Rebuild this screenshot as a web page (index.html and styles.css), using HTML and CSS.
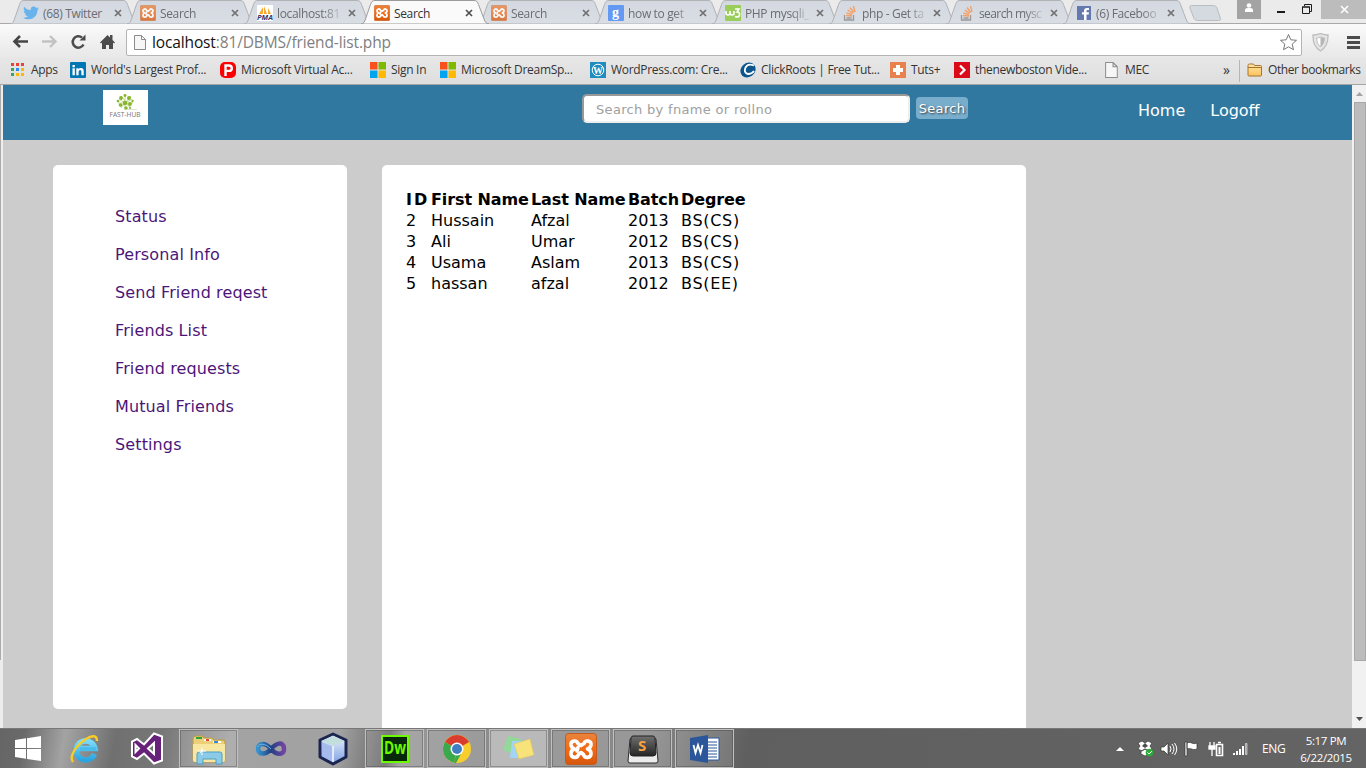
FILE: index.html
```html
<!DOCTYPE html>
<html lang="en">
<head>
<meta charset="utf-8">
<title>Search</title>
<link rel="stylesheet" href="styles.css">
</head>
<body>
<svg class="defs" width="0" height="0">
  <defs>
    <linearGradient id="tabfill" x1="0" y1="0" x2="0" y2="1"><stop offset="0" stop-color="#d4d9e1"/><stop offset="1" stop-color="#d9dde4"/></linearGradient>
    <linearGradient id="folder" x1="0" y1="0" x2="0" y2="1"><stop offset="0" stop-color="#ffe5a8"/><stop offset="1" stop-color="#fbc35c"/></linearGradient>
    <linearGradient id="orange" x1="0" y1="0" x2="0" y2="1"><stop offset="0" stop-color="#e8843f"/><stop offset=".5" stop-color="#f36b14"/><stop offset="1" stop-color="#d5560c"/></linearGradient>
    <linearGradient id="inf" x1="0" y1="0" x2="1" y2="0"><stop offset="0" stop-color="#3794cf"/><stop offset=".5" stop-color="#223f83"/><stop offset="1" stop-color="#7245a4"/></linearGradient>
    <linearGradient id="key" x1="0" y1="0" x2="0" y2="1"><stop offset="0" stop-color="#707070"/><stop offset="1" stop-color="#252525"/></linearGradient>
    <linearGradient id="cube" x1="0" y1="0" x2="0" y2="1"><stop offset="0" stop-color="#f0f6ff"/><stop offset="1" stop-color="#7d9fe0"/></linearGradient>
    <linearGradient id="ie" x1="0" y1="0" x2="0" y2="1"><stop offset="0" stop-color="#7bdcfa"/><stop offset="1" stop-color="#2ba5e0"/></linearGradient>
  </defs>
  <symbol id="tab" viewBox="0 0 129 24"><path d="M0 24C3 23.500 3.500 22 4.500 19L9.500 4.500C10.500 2 11 .5 14 .5H113C116 .5 116.500 2 117.500 4.500L123 19C124 22 125 23.500 128 24Z"/></symbol>
  <symbol id="xampp" viewBox="0 0 32 32"><rect x=".5" y=".5" width="31" height="31" rx="3" fill="url(#orange)" stroke="#c65a1c"/><path d="M19 10.500C20.500 6.500 26.500 7.500 26 12Q25.500 15 22.500 16 26 17 26 20.500C26 25.500 19.500 25.500 18.500 21.500L16 19.500 13.500 21.500C12.500 25.500 6 25.500 6 20.500Q6 17 9.500 16 6.500 15 6 12C5.500 7.500 11.500 6.500 13 10.500L16 12.500ZM13 14.500L12 18" fill="none" stroke="#fff" stroke-width="3.600" stroke-linejoin="round" stroke-linecap="round"/></symbol>
  <symbol id="so" viewBox="0 0 16 16"><path d="M2.500 10v5h9v-5M4.500 13h5" fill="none" stroke="#999" stroke-width="1.300"/><path d="M4 10.500l6 .5M4.500 8l5.500 1.700M5.700 5l5 3.300M8 2.500l3.700 5M11.500 1l1.500 6" stroke="#f3a167" stroke-width="1.400"/></symbol>
  <symbol id="ms" viewBox="0 0 16 16"><path fill="#f8511d" d="M0 0h7.500v7.500H0z"/><path fill="#7fba00" d="M8.500 0H16v7.500H8.500z"/><path fill="#02a4ef" d="M0 8.500h7.500V16H0z"/><path fill="#ffb902" d="M8.500 8.500H16V16H8.500z"/></symbol>
  <symbol id="doc" viewBox="0 0 12 15"><path d="M.5.5h7l4 4v10H.5zM7.500.5v4h4" fill="#f6f6f6" stroke="#8b8b8b"/></symbol>
</svg>

<header class="tabs">
  <div class="tab"><svg class="shape"><use href="#tab"/></svg><svg class="fav" viewBox="0 0 16 16"><path fill="#68b3ec" d="M16 3.500c-.6.300-1.200.4-1.800.5.600-.4 1-1 1.300-1.700-.7.300-1.400.5-2 .7C10.500 0 7 2 7.800 5.200 5 5 3 4 1.200 1.800.200 3.700.800 5.200 2.200 6.200c-.5 0-1-.2-1.400-.4 0 1.800 1 2.900 2.600 3.300H2c.5 1.300 1.500 2 3 2.200-1.500 1.100-3 1.500-5 1.400 7 4 14.500 0 14.400-7.600.6-.4 1.200-1 1.600-1.600z"/></svg><span class="label">(68) Twitter</span><svg class="close" viewBox="0 0 8 8"><path d="M1 1l6 6M7 1l-6 6"/></svg></div>
  <div class="tab"><svg class="shape"><use href="#tab"/></svg><svg class="fav dim"><use href="#xampp"/></svg><span class="label">Search</span><svg class="close" viewBox="0 0 8 8"><path d="M1 1l6 6M7 1l-6 6"/></svg></div>
  <div class="tab"><svg class="shape"><use href="#tab"/></svg><svg class="fav" viewBox="0 0 16 16"><path fill="#fff" d="M0 0h16v16H0z"/><path fill="#f7a72d" d="M2 9L6 2v7zM7 9V1l3 8zM11 9V3l3 6z"/><text x="0" y="15" textLength="16" lengthAdjust="spacingAndGlyphs" class="pma">PMA</text></svg><span class="label">localhost:81</span><svg class="close" viewBox="0 0 8 8"><path d="M1 1l6 6M7 1l-6 6"/></svg></div>
  <div class="tab active"><svg class="shape"><use href="#tab"/></svg><svg class="fav"><use href="#xampp"/></svg><span class="label">Search</span><svg class="close" viewBox="0 0 8 8"><path d="M1 1l6 6M7 1l-6 6"/></svg></div>
  <div class="tab"><svg class="shape"><use href="#tab"/></svg><svg class="fav dim"><use href="#xampp"/></svg><span class="label">Search</span><svg class="close" viewBox="0 0 8 8"><path d="M1 1l6 6M7 1l-6 6"/></svg></div>
  <div class="tab"><svg class="shape"><use href="#tab"/></svg><svg class="fav" viewBox="0 0 16 16"><rect width="16" height="16" rx="1" fill="#6499f3"/><text x="4" y="12" class="goog">g</text></svg><span class="label">how to get</span><svg class="close" viewBox="0 0 8 8"><path d="M1 1l6 6M7 1l-6 6"/></svg></div>
  <div class="tab"><svg class="shape"><use href="#tab"/></svg><svg class="fav" viewBox="0 0 16 16"><rect width="16" height="16" rx="1" fill="#9bcd5d"/><path d="M1 6v2q0 2 2 2t2-2V6v2q0 2 2 2t2-2V6M10 4h4l-2 3q3 0 2.500 3t-4.500 1.500" fill="none" stroke="#fff" stroke-width="1.600"/></svg><span class="label">PHP mysqli_</span><svg class="close" viewBox="0 0 8 8"><path d="M1 1l6 6M7 1l-6 6"/></svg></div>
  <div class="tab"><svg class="shape"><use href="#tab"/></svg><svg class="fav"><use href="#so"/></svg><span class="label">php - Get ta</span><svg class="close" viewBox="0 0 8 8"><path d="M1 1l6 6M7 1l-6 6"/></svg></div>
  <div class="tab"><svg class="shape"><use href="#tab"/></svg><svg class="fav"><use href="#so"/></svg><span class="label tight">search mysc</span><svg class="close" viewBox="0 0 8 8"><path d="M1 1l6 6M7 1l-6 6"/></svg></div>
  <div class="tab"><svg class="shape"><use href="#tab"/></svg><svg class="fav" viewBox="0 0 16 16"><path fill="#6479b0" d="M1 1h14v14H1z"/><path fill="#fff" d="M8 15V9.500H6V7.300h2V6q0-3 3-3h2v2h-1.500q-1 0-1 1v1.300H13l-.3 2.200h-2.200V15z"/></svg><span class="label">(6) Faceboo</span><svg class="close" viewBox="0 0 8 8"><path d="M1 1l6 6M7 1l-6 6"/></svg></div>
  <svg class="newtab" width="34" height="17"><path d="M3.500.5h22q2.500 0 3.300 2l3.700 11q.5 2-2 2H9.500q-2.500 0-3.500-2L2 3q-.8-2.500 1.500-2.500z" fill="#d5dae1" stroke="#b9bcc1"/></svg>
  <div class="window">
    <div class="user"><svg width="10" height="10"><path fill="#fff" d="M1 9V7q0-2 3-2h2q3 0 3 2v2z"/><circle cx="5" cy="2.500" r="2.300" fill="#fff"/></svg></div>
    <svg class="mini" width="9" height="3"><path fill="#1b1b1b" d="M0 0h8v2H0z"/></svg>
    <svg class="maxi" width="11" height="11"><path d="M2.500 2V.5h7v7H8M.5 3h7v6.500h-7zM0 3h8" fill="none" stroke="#1b1b1b"/></svg>
    <div class="x"><svg width="9" height="9"><path d="M1 1l7 7M8 1L1 8" stroke="#fff" stroke-width="1.500"/></svg></div>
  </div>
</header>

<div class="toolbar">
  <svg class="tools" width="110" height="20" fill="none"><path d="M28 9.500H15M20 4l-5.500 5.500L20 15" stroke="#464646" stroke-width="2.600"/><path d="M42 9.500h13M50 4l5.500 5.500L50 15" stroke="#c2c2c2" stroke-width="2.400"/><path d="M83.500 12.500a5.700 5.700 0 1 1-1.500-7" stroke="#4c4c4c" stroke-width="2.500"/><path d="M85.500 2.500v6h-6z" fill="#4c4c4c"/></svg>
  <svg class="home" width="15" height="16"><path fill="#4c4c4c" d="M0 8.500L7.500 1l2.500 2.500V1h2.500v5L15 8.500l-1 1-1-1V15H9v-4H6v4H2V8.500l-1 1z"/></svg>
  <div class="omnibox"><svg width="12" height="15"><use href="#doc"/></svg><span class="url"><b>localhost</b>:81/DBMS/friend-list.php</span><svg class="star" width="19" height="19"><path d="M9.500 1.500l2.300 5.300 5.700.5-4.300 3.800 1.300 5.600-5-2.900-5 2.900 1.300-5.600-4.300-3.800 5.700-.5z" fill="#fff" stroke="#777"/></svg></div>
  <svg class="shield" width="17" height="19"><path d="M1 2q4 0 7.500-1.500Q12 2 16 2q.5 11-7.500 16Q.5 13 1 2z" fill="#e5e5e5" stroke="#bdbdbd" stroke-width="1.300"/><path d="M4.500 5q2 0 4-1 2 1 4 1 0 6-4 9-4-3-4-9z" fill="#fff" stroke="#bdbdbd"/><path d="M8.500 4v10q4-3 4-9-2 0-4-1z" fill="#b6b6b6"/></svg>
  <svg class="menu" width="13" height="13"><path d="M0 1.500h13M0 6.500h13M0 11.500h13" stroke="#4c4c4c" stroke-width="3"/></svg>
</div>

<nav class="bookmarks">
  <span><svg viewBox="0 0 16 16"><path fill="#ea4335" d="M1 1h3v3H1zM6 1h3v3H6zM11 1h3v3h-3z"/><path fill="#34a853" d="M1 6h3v3H1zM1 11h3v3H1z"/><path fill="#2a8cf4" d="M6 6h3v3H6z"/><path fill="#f9b908" d="M11 6h3v3h-3zM6 11h3v3H6zM11 11h3v3h-3z"/></svg>Apps</span>
  <span><svg viewBox="0 0 16 16"><rect width="16" height="16" rx="1" fill="#0077b5"/><path fill="#fff" d="M2.500 6.300h2.300v7H2.500zM2.500 3h2.300v2.200H2.500zM6.300 6.300h2.200v1Q9.300 6 11 6.100q2.700 0 2.700 3.200v4h-2.300V9.500q0-1.500-1.300-1.500-1.500 0-1.500 1.800v3.500H6.300z"/></svg>World's Largest Prof...</span>
  <span><svg viewBox="0 0 16 16"><rect width="16" height="16" rx="5" fill="#f00"/><path d="M5.500 14V3.500h3.300q3 0 3 2.700t-3 2.700H5.500" fill="none" stroke="#fff" stroke-width="2.400"/></svg>Microsoft Virtual Ac...</span>
  <span><svg><use href="#ms"/></svg>Sign In</span>
  <span><svg><use href="#ms"/></svg>Microsoft DreamSp...</span>
  <span><svg viewBox="0 0 16 16"><path fill="#1f8dc0" d="M0 0h16v16H0z"/><circle cx="8" cy="8" r="5.800" fill="none" stroke="#fff"/><text x="3" y="12" class="wp">W</text></svg>WordPress.com: Cre...</span>
  <span><svg viewBox="0 0 16 16"><ellipse cx="8" cy="8" rx="8" ry="7" transform="rotate(-40 8 8)" fill="#0d568d"/><path d="M14 3.500Q8 1 5.500 5.500q-2 5.500 2.500 6.500 4 0 6-3" fill="none" stroke="#fff" stroke-width="1.800"/></svg>ClickRoots | Free Tut...</span>
  <span><svg viewBox="0 0 16 16"><path fill="#e9814f" d="M0 0h16v16H0z"/><path d="M8 3v10M3 8h10" stroke="#fff" stroke-width="4"/></svg>Tuts+</span>
  <span><svg viewBox="0 0 16 16"><path fill="#db0a18" d="M0 0h16v16H0z"/><path d="M6 3.500L10.500 8 6 12.500" fill="none" stroke="#fff" stroke-width="2.200"/></svg>thenewboston Vide...</span>
  <span class="mec"><svg viewBox="-1 0 15 15"><use href="#doc" width="12" height="15"/></svg>MEC</span>
  <span class="more">»</span>
  <span class="other"><svg viewBox="0 0 16 16"><path d="M1 3.500q0-1.500 1.500-1.500h4l1 1.500h6q1 0 1 1V13q0 1-1 1H2q-1 0-1-1zM1 5.500h13.500" fill="url(#folder)" stroke="#a9742e"/></svg>Other bookmarks</span>
</nav>

<div class="viewport">
  <div class="leftedge"></div>
  <main class="page">
    <div class="topbar">
      <svg class="logo" width="45" height="35"><path fill="#fff" d="M0 0h45v35H0z"/><g fill="none" stroke="#a9c860" stroke-width=".7"><path d="M16 9l6 4 7-4M17 17l5-4 6 5M22 5v15M15 13h15M18 6l10 12M28 6L18 18"/></g><g fill="#86b52b"><circle cx="22" cy="13" r="2.200"/><circle cx="18" cy="8" r="1.900"/><circle cx="26" cy="8" r="2"/><circle cx="27" cy="14" r="1.900"/><circle cx="17.500" cy="15" r="1.800"/><circle cx="23" cy="18" r="1.700"/><circle cx="22" cy="5.500" r="1.400"/><circle cx="29.500" cy="11" r="1.200"/><circle cx="15" cy="11" r="1.300"/><circle cx="27" cy="18" r="1.100"/></g><path d="M22 19.500h12" stroke="#ccc" stroke-width=".6"/><text x="6.500" y="27" textLength="31" lengthAdjust="spacingAndGlyphs" class="brand">FAST-HUB</text></svg>
      <div class="search"><input type="text" placeholder="Search by fname or rollno"><button>Search</button></div>
      <div class="links"><a>Home</a><a>Logoff</a></div>
    </div>
    <div class="columns">
      <ul class="sidebar"><li>Status</li><li>Personal Info</li><li>Send Friend reqest</li><li>Friends List</li><li>Friend requests</li><li>Mutual Friends</li><li>Settings</li></ul>
      <section class="content">
        <table>
          <colgroup><col class="c1"><col class="c2"><col class="c3"><col class="c4"><col class="c5"></colgroup>
          <tr><th class="id">ID</th><th>First Name</th><th>Last Name</th><th>Batch</th><th>Degree</th></tr>
          <tr><td>2</td><td>Hussain</td><td>Afzal</td><td>2013</td><td class="deg">BS(CS)</td></tr>
          <tr><td>3</td><td>Ali</td><td>Umar</td><td>2012</td><td class="deg">BS(CS)</td></tr>
          <tr><td>4</td><td>Usama</td><td>Aslam</td><td>2013</td><td class="deg">BS(CS)</td></tr>
          <tr><td>5</td><td>hassan</td><td>afzal</td><td>2012</td><td class="deg">BS(EE)</td></tr>
        </table>
      </section>
    </div>
  </main>
  <div class="scrollbar"><svg width="14" height="17"><path d="M4 11h7L7.500 7z" fill="#a3a3a3"/></svg><div class="thumb"></div><svg width="14" height="17"><path d="M4 6h7l-3.500 4z" fill="#505050"/></svg></div>
</div>

<footer class="taskbar">
  <div class="apps">
    <div class="start"><svg width="26" height="26"><path fill="#fff" d="M0 4l11-1.700V12H0zM12 2.200L26 0v12H12zM0 13h11v9.700L0 21zM12 13h14v12l-14-2z"/></svg></div>
    <div><svg width="32" height="32"><path d="M25.500 21a9.500 9.500 0 1 1 .5-5.500H10" fill="none" stroke="url(#ie)" stroke-width="5.500"/><path d="M11 16h16" stroke="#49bcec" stroke-width="3.500"/><path d="M4 29C0 24 6 13 17 6 23 2 28 2 28 8" fill="none" stroke="#f9cc28" stroke-width="2.400"/></svg></div>
    <div><svg width="34" height="34"><path fill="#68217a" stroke="#fff" stroke-width="2" fill-rule="evenodd" d="M24 1.500l8 3v24l-8 3-10-10-7 5.500-5-2.500V9.500L7 7l7 5.500zM24 11l-6 5.500 6 5.500zM5.500 13v7L9 16.500z"/></svg></div>
    <div class="open"><svg width="34" height="32"><path d="M1 6q0-3 3-3h6l2 2h8l2 2h9q2 0 2 2v18q0 2-2 2H3q-2 0-2-2z" fill="#ecd077" stroke="#bd9a3f"/><path d="M4 4h6v2H4z" fill="#2ba43c"/><path d="M12 6h7v2h-7z" fill="#fff"/><path d="M14 6h3v2h-3z" fill="#dc4935"/><path d="M21 8h8v2h-8z" fill="#fff"/><path d="M22 8h4v2h-4z" fill="#3288dc"/><path d="M1 11h32v16q0 2-2 2H3q-2 0-2-2z" fill="#f8e7a0"/><path d="M5 31V21q0-2 2-2h21q2 0 2 2v10h-6v-5H11v5z" fill="#8bcbe8" stroke="#4b9fc8"/><path d="M8 20l3-4M10 15v7M6 18h8" stroke="#fff"/></svg></div>
    <div><svg width="32" height="20"><path d="M16 10C10 3 2.500 4 3 10s8 6 13 0 12-8 13-1-7 8-13 1z" fill="none" stroke="url(#inf)" stroke-width="4.500"/><path d="M16 10C10 3 3 5 3 8" fill="none" stroke="#72b4dc"/></svg></div>
    <div><svg width="32" height="34"><path d="M16 2l13 6v17l-13 7-13-7V8z" fill="url(#cube)" stroke="#1b2550" stroke-width="3" stroke-linejoin="round"/><path d="M5 9l11-5 11 5-11 5z" fill="#c2dedd"/><path d="M5 10l11 5v15L5 24z" fill="#a6bbed"/><path d="M16 14v16" stroke="#f5faff" stroke-width="1.500"/></svg></div>
    <div class="open"><svg width="28" height="28"><path d="M1 1h26v26H1z" fill="#07280b" stroke="#6bfa00" stroke-width="2"/><text x="3" y="19" textLength="22" lengthAdjust="spacingAndGlyphs" class="dw">Dw</text></svg></div>
    <div class="open"><svg width="30" height="30"><circle cx="15" cy="15" r="14" fill="#f7ce2d"/><path d="M15 15L2.900 8a14 14 0 0 1 24.200 0z" fill="#da3d2d"/><path d="M15 15L2.900 8A14 14 0 0 0 12 28.700z" fill="#3ba84c"/><path d="M14 21l-2 7.500q1.500.5 2 .5l5-9z" fill="#3ba84c"/><circle cx="15" cy="15" r="6.500" fill="#fff"/><circle cx="15" cy="15" r="5" fill="#417fc3"/></svg></div>
    <div class="open pale"><svg width="34" height="28"><path fill="#92d99a" d="M6 1l13 3-5 16L1 15z"/><path fill="#a2d4f6" d="M10 6h15l-2 17H8z"/><path fill="#f8e27a" stroke="#dfc759" stroke-width=".6" d="M12 9l16-5 4 16-15 4z"/></svg></div>
    <div class="open"><svg width="32" height="32"><use href="#xampp"/></svg></div>
    <div class="open"><svg width="32" height="30"><path d="M3 5h26l2 22q0 2-2 2H3q-2 0-2-2z" fill="#ececec" stroke="#2c2c2c"/><path d="M6 2h20q1.500 0 2 2l1 15q0 3-3 3H6q-3 0-3-3L4 4q.5-2 2-2z" fill="url(#key)" stroke="#222"/><text x="11" y="17" class="sub">S</text></svg></div>
    <div class="open"><svg width="32" height="30"><path d="M16 4h14v22H16z" fill="#fff" stroke="#2b579a"/><path d="M19 8h9M19 11h9M19 14h9M19 17h9M19 20h9M19 23h9" stroke="#2b579a"/><path d="M1 4l18-3v28L1 26z" fill="#2b579a"/><path d="M4.500 11l2 8 2.500-8 2.500 8 2-8" fill="none" stroke="#fff" stroke-width="1.800"/></svg></div>
  </div>
  <div class="tray">
    <svg class="trayicons" width="146" height="20"><path d="M1 12h8L5 8z" fill="#fff"/><g fill="#fff" stroke="#333" stroke-width=".7"><path d="M23 4l4-2 3 2 3-2 4 2-2 3 2 3-4 2-3-2-3 2-4-2 2-3zM26 12l4-2 5 2v3l-5 2-4-2z"/><path d="M46 8h3l4-4v12l-4-4h-3z"/><path d="M70 3h2v14h-2zM72 4c4-2 5 2 10 0v6c-5 2-6-2-10 0z"/></g><path d="M30 4l-3 3 3 2 3-2z" fill="#4e4e4e"/><circle cx="34.500" cy="13.500" r="3.800" fill="#2cad37"/><path d="M32.500 13.500l1.500 1.500 3-3M55 7q2 3 0 6M57 5q4 5 0 10M59.500 4q4.500 6 0 12" fill="none" stroke="#fff"/><path d="M95 3v4M99 3v4M94 7h6v3h-6zM97 10v7" fill="#fff" stroke="#fff" stroke-width="1.300"/><path d="M101.500 5.500h6v11h-6zM103 3.500h3" fill="none" stroke="#fff" stroke-width="1.600"/><path d="M103.500 8h2v7h-2z" fill="#fff"/><path fill="#fff" d="M118 14h2v2h-2zM121 12h2v4h-2zM124 10h2v6h-2zM127 7h2v9h-2z"/><path d="M130.500 4.500h1.500v11h-1.500z" fill="#999" stroke="#ddd" stroke-width=".7"/></svg>
    <span class="lang">ENG</span>
    <div class="clock"><span>5:17 PM</span><span>6/22/2015</span></div>
  </div>
</footer>
</body>
</html>
```
FILE: styles.css
```css
* { box-sizing: border-box; }
body { margin: 0; width: 1366px; height: 768px; overflow: hidden; display: grid; grid-template-rows: 24px 33px 28px 643px 40px; background: #ececec; font: 12px "Open Sans", "Noto Sans", sans-serif; color: #333; }
svg { display: block; flex: none; }
.defs { position: absolute; }

.tabs { display: flex; padding-left: 10px; background: #ebebeb; border-bottom: 1px solid #a9a9a9; position: relative; white-space: nowrap; }
.tab { position: relative; width: 117px; height: 24px; flex: none; display: flex; align-items: center; padding: 2px 0 0 13px; color: #6a6d72; z-index: 1; }
.shape { position: absolute; left: 0; top: 0; width: 129px; height: 24px; fill: url(#tabfill); stroke: #b0b2b6; z-index: -1; }
.tab.active { color: #333; z-index: 3; }
.active .shape { fill: #fafafa; stroke: #9b9b9b; }
.fav { width: 16px; height: 16px; }
.dim { opacity: .75; }
.label { width: 64px; margin-left: 4px; font-size: 12px; letter-spacing: -.35px; -webkit-mask-image: linear-gradient(90deg, #000 72%, rgba(0,0,0,.15)); mask-image: linear-gradient(90deg, #000 72%, rgba(0,0,0,.15)); }
.tight { letter-spacing: -.6px; }
.tab:first-child .label, .active .label { -webkit-mask-image: none; mask-image: none; }
.close { width: 8px; height: 8px; margin-left: 7px; stroke: #707070; stroke-width: 1.7; }
.active .close { stroke: #505050; }
.newtab { margin: 5px 0 0 8px; }
.window { position: relative; display: flex; margin-left: 15px; width: 129px; height: 19px; }
.user { width: 24px; height: 19px; background: #a3a3a3; padding: 3px 7px; }
.mini { margin: 11px 0 0 16px; }
.maxi { margin: 4px 0 0 16px; }
.x { width: 46px; height: 19px; margin-left: 8px; background: #bcbcbc; padding: 5px 0 0 19px; flex: none; }

.toolbar { display: flex; align-items: center; background: linear-gradient(#fafafa, #e8e8e8); padding: 3px 7px 0 0; }
.tools { width: 100px; }
.omnibox { width: 1176px; height: 27px; margin-left: 11px; flex: none; display: flex; align-items: center; background: #fff; border: 1px solid #b4b4b4; border-radius: 2px; padding: 0 3px 0 7px; }
.url { margin-left: 6px; font-size: 15.5px; letter-spacing: -.13px; color: #808080; flex: 1; }
.url b { font-weight: 400; color: #111; }
.shield { margin-left: 10px; }
.menu { margin-left: 18px; }

.bookmarks { display: grid; grid-template-columns: 60px 150px 150px 70px 150px 150px 150px 64px 152px 117px 15px 1fr; padding: 0 0 2px 10px; background: linear-gradient(#e7e7e7, #dedede); border-bottom: 1px solid #a5a5a5; font-size: 12px; letter-spacing: -.3px; white-space: nowrap; }
.bookmarks span { display: flex; align-items: center; gap: 5px; }
.bookmarks svg { width: 16px; height: 16px; }
.bookmarks .mec { margin-left: -2px; }
.bookmarks .more { font-size: 14px; }
.bookmarks .other { border-left: 1px solid #b5b5b5; padding-left: 7px; margin-left: 1px; margin-top: 3px; padding-bottom: 3px; letter-spacing: -.4px; }

.viewport { display: grid; grid-template-columns: 3px 1349px 14px; overflow: hidden; }
.leftedge { background: #f0f0f0; border-right: 2px solid #eee; border-left: 1px solid #aaa; height: 575px; }
.page { background: #ccc; font: 16px "DejaVu Sans", Verdana, sans-serif; color: #000; overflow: hidden; }
.topbar { height: 55px; background: #3078a0; display: flex; }
.logo { margin: 5px 0 0 100px; }
.search { display: flex; margin: 9px 0 0 434px; width: 387px; align-items: flex-start; }
.search input { width: 328px; height: 29px; border: 2px solid; border-color: #999 #eee #eee #999; border-radius: 5px; padding: 2px 12px 1px; font: 13px "DejaVu Sans", sans-serif; letter-spacing: .32px; }
.search input::placeholder { color: #a0a0a0; opacity: 1; }
.search button { width: 52px; height: 22px; margin: 3px 0 0 6px; padding: 0; border: 0; border-radius: 4px; background: #78adcb; color: #fff; font: 13px "DejaVu Sans", sans-serif; letter-spacing: .3px; text-shadow: 1px 1px 2px #333; }
.links { display: flex; gap: 25px; padding: 16px 0 0 169px; color: #fff; }
.columns { display: flex; align-items: flex-start; gap: 35px; padding: 25px 0 0 50px; }
.sidebar { width: 294px; height: 544px; margin: 0; padding: 33px 0 0 62px; list-style: none; background: #fff; border-radius: 5px; color: #4c1678; letter-spacing: .12px; }
.sidebar li { height: 38px; line-height: 38px; }
.content { width: 644px; height: 600px; padding: 24px 0 0 24px; background: #fff; border-radius: 5px; }
table { table-layout: fixed; width: 344px; border-collapse: collapse; line-height: 21px; white-space: nowrap; }
.c1 { width: 25px; } .c2 { width: 100px; } .c3 { width: 97px; } .c4 { width: 53px; } .c5 { width: 69px; }
th, td { padding: 0; height: 21px; text-align: left; }
th { letter-spacing: -.1px; }
.id { letter-spacing: 2px; }
.deg { letter-spacing: .7px; }

.scrollbar { display: flex; flex-direction: column; background: #f1f1f1; }
.thumb { width: 12px; height: 559px; margin: 0 0 50px 2px; background: #bcbcbc; border: 1px solid #a8a8a8; }

.taskbar { display: flex; justify-content: space-between; background: linear-gradient(100deg, #656565 0, #6a6a6a 25px, #a3a3a3 65px, #707070 115px, #777 160px, #a3a3a3 230px, #a2a2a2 335px, #686868 385px, #999 400px, #8d8d8d 470px, #888 640px, #5f5f5f 740px, #646464 100%); border-top: 1px solid #777; color: #fff; }
.apps { display: grid; grid-template-columns: 52px repeat(11, 59px); column-gap: 3px; padding-left: 0; height: 40px; }
.apps > div { display: flex; align-items: center; justify-content: center; height: 39px; }
.apps > .start { padding-left: 4px; }
.apps .open { border: 1px solid #c0c0c0; background: rgba(255,255,255,.13); outline: 1px solid rgba(60,60,60,.35); outline-offset: -2px; }
.apps .pale { background: rgba(255,255,255,.4); }
.tray { display: flex; align-items: center; }
.trayicons { margin-right: 1px; }
.lang { font-size: 12px; letter-spacing: -.3px; width: 32px; }
.clock { width: 73px; padding-right: 9px; display: flex; flex-direction: column; line-height: 17px; text-align: center; white-space: nowrap; letter-spacing: -.35px; font-size: 11.5px; }

.pma { font: italic bold 6.500px "Open Sans", sans-serif; fill: #35366f; }
.goog { font: bold 14px "Liberation Serif", serif; fill: #fff; }
.wp { font: bold 10px "Liberation Serif", serif; fill: #fff; }
.brand { font: 7.500px "Open Sans", sans-serif; fill: #777; }
.dw { font: bold 18px "Open Sans", sans-serif; fill: #6bfa00; }
.sub { font: bold 15px "Open Sans", sans-serif; fill: #f8a13f; }
```
